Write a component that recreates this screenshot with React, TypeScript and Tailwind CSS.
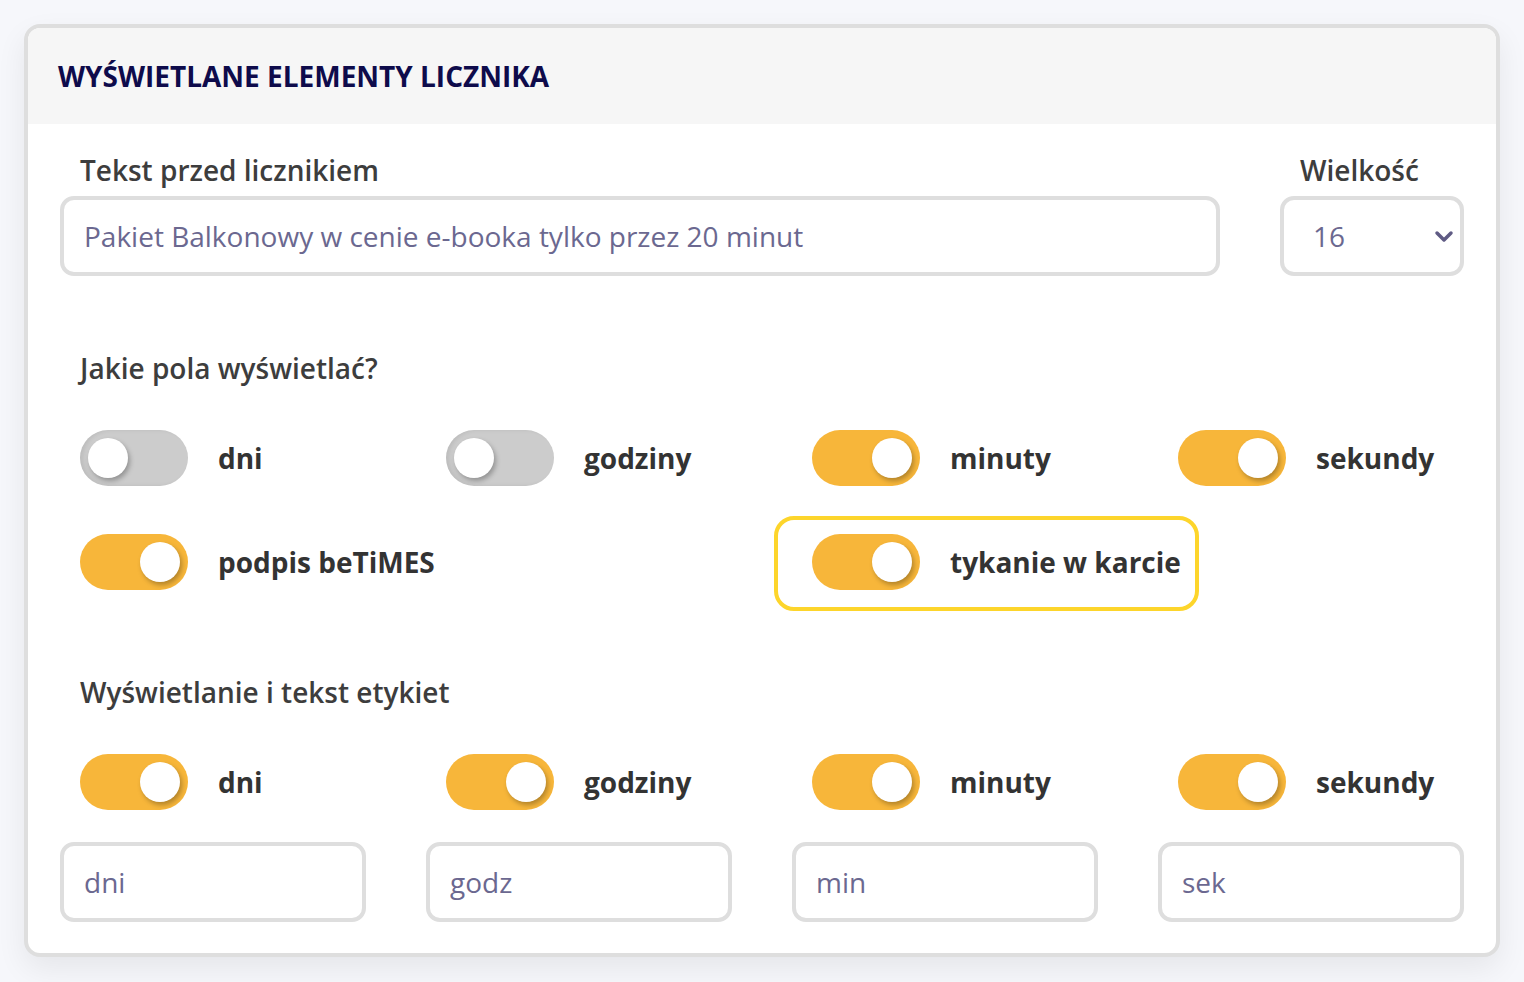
import React from "react";

const font = { fontFamily: '"Open Sans", "Noto Sans", sans-serif' };

function Toggle({ on }: { on: boolean }) {
  return (
    <div
      className={`relative h-[56px] w-[108px] shrink-0 rounded-full ${
        on ? "bg-[#f7b63a]" : "bg-[#cccccc] shadow-[inset_3px_0_4px_rgba(0,0,0,0.08)]"
      }`}
    >
      <div
        className={`absolute top-[8px] h-[40px] w-[40px] rounded-full bg-white shadow-[2px_3px_5px_rgba(0,0,0,0.28)] ${
          on ? "left-[60px]" : "left-[8px]"
        }`}
      />
    </div>
  );
}

function ToggleItem({ on, label, highlight }: { on: boolean; label: string; highlight?: boolean }) {
  return (
    <div className="relative flex items-center gap-[30px] pl-[20px]">
      {highlight && (
        <div className="pointer-events-none absolute left-[-18px] top-[-18px] bottom-[-21px] right-[-18px] rounded-[20px] border-[4px] border-[#fdd52b]" />
      )}
      <Toggle on={on} />
      <span className="whitespace-nowrap text-[28px] font-bold leading-[40px] text-[#333333]">{label}</span>
    </div>
  );
}

function TextBox({ placeholder }: { placeholder: string }) {
  return (
    <input
      readOnly
      placeholder={placeholder}
      style={font}
      className="h-[80px] w-full rounded-[14px] border-[4px] border-[#dedede] bg-white px-[20px] text-[28px] text-[#6b6890] outline-none placeholder:text-[#6b6890]"
    />
  );
}

export default function App() {
  return (
    <div style={font} className="min-h-[982px] w-full bg-[#f6f7fb] p-[24px]">
      <div className="w-[1476px] overflow-hidden rounded-[16px] border-[4px] border-[#dedede] bg-white shadow-[0_12px_30px_rgba(0,0,0,0.07)]">
        <div className="flex h-[96px] items-center bg-[#f6f6f6] px-[30px]">
          <h1 className="text-[28px] font-bold uppercase leading-none text-[#0e0b4b]">
            Wyświetlane elementy licznika
          </h1>
        </div>

        <div className="px-[32px] pb-[31px] pt-[26px]">
          <div className="flex gap-[60px]">
            <div className="flex-1">
              <div className="mb-[6px] pl-[20px] text-[28px] font-semibold leading-[40px] text-[#3d3d3d]">Tekst przed licznikiem</div>
              <TextBox placeholder="Pakiet Balkonowy w cenie e-booka tylko przez 20 minut" />
            </div>
            <div className="w-[184px]">
              <div className="mb-[6px] pl-[20px] text-[28px] font-semibold leading-[40px] text-[#3d3d3d]">Wielkość</div>
              <div className="flex h-[80px] items-center justify-between rounded-[14px] border-[4px] border-[#dedede] bg-white pl-[29px] pr-[6px]">
                <span className="text-[28px] text-[#6b6890]">16</span>
                <svg width="20" height="14" viewBox="0 0 20 14">
                  <path d="M3 4 L10 11 L17 4" fill="none" stroke="#5f5b84" strokeWidth="3.5" strokeLinecap="round" strokeLinejoin="round" />
                </svg>
              </div>
            </div>
          </div>

          <div className="mt-[72px] pl-[20px] text-[28px] font-semibold leading-[40px] text-[#3d3d3d]">Jakie pola wyświetlać?</div>
          <div className="mt-[42px] grid grid-cols-4 gap-x-[60px] gap-y-[48px]">
            <ToggleItem on={false} label="dni" />
            <ToggleItem on={false} label="godziny" />
            <ToggleItem on label="minuty" />
            <ToggleItem on label="sekundy" />
            <ToggleItem on label="podpis beTiMES" />
            <div />
            <div className="flex">
              <ToggleItem on label="tykanie w karcie" highlight />
            </div>
            <div />
          </div>

          <div className="mt-[82px] pl-[20px] text-[28px] font-semibold leading-[40px] text-[#3d3d3d]">Wyświetlanie i tekst etykiet</div>
          <div className="mt-[42px] grid grid-cols-4 gap-x-[60px]">
            <ToggleItem on label="dni" />
            <ToggleItem on label="godziny" />
            <ToggleItem on label="minuty" />
            <ToggleItem on label="sekundy" />
          </div>
          <div className="mt-[32px] grid grid-cols-4 gap-x-[60px]">
            <TextBox placeholder="dni" />
            <TextBox placeholder="godz" />
            <TextBox placeholder="min" />
            <TextBox placeholder="sek" />
          </div>
        </div>
      </div>
    </div>
  );
}
